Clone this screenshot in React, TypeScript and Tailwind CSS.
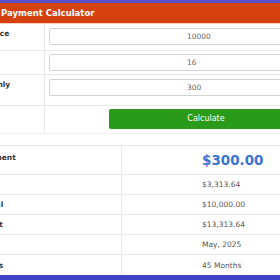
export default function App() {
  const results = [
    { label: 'Total Interest', value: '$3,313.64' },
    { label: 'Total Principal', value: '$10,000.00' },
    { label: 'Total Payment', value: '$13,313.64' },
    { label: 'Payoff Date', value: 'May, 2025' },
    { label: 'Payoff Months', value: '45 Months' },
  ];

  return (
    <div className="w-[280px] h-[280px] overflow-hidden bg-white leading-[1.2] font-['DejaVu_Sans',sans-serif]">
      {/* top accent */}
      <div className="h-[3px] bg-[#5a4fc6]" />

      <div className="-ml-[70px] w-[420px]">
        {/* Header */}
        <div className="h-[20px] bg-[#d5420f] flex items-center pl-[45px]">
          <span className="text-white font-bold text-[8.5px] leading-[1.2] whitespace-nowrap">Loan Payment Calculator</span>
        </div>
        <div className="h-px bg-[#f7d2c2]" />

        {/* Form */}
        <div>
          <div className="flex border-b border-[#e8e8e8]">
            <div className="w-[115px] shrink-0 border-r border-[#e8e8e8] pl-[23px] pt-[5px] text-[7.5px] leading-[1.2] font-bold text-[#333] whitespace-nowrap">
              Loan Balance
            </div>
            <div className="pl-[4px] pt-[4px] pb-[5px]">
              <input
                readOnly
                value="10000"
                className="block w-[300px] h-[17px] border border-[#d3d3d3] rounded-[2px] pl-[137px] text-[7.5px] text-[#666] outline-none"
              />
            </div>
          </div>
          <div className="flex border-b border-[#e8e8e8]">
            <div className="w-[115px] shrink-0 border-r border-[#e8e8e8] pl-[23px] pt-[5px] text-[7.5px] leading-[1.2] font-bold text-[#333] whitespace-nowrap">
              APR (%)
            </div>
            <div className="pl-[4px] pt-[3px] pb-[3px]">
              <input
                readOnly
                value="16"
                className="block w-[300px] h-[17px] border border-[#d3d3d3] rounded-[2px] pl-[137px] text-[7.5px] text-[#666] outline-none"
              />
            </div>
          </div>
          <div className="flex border-b border-[#e8e8e8]">
            <div className="w-[115px] shrink-0 border-r border-[#e8e8e8] pl-[25px] pt-[5px] text-[7.5px] leading-[1.2] font-bold text-[#333] whitespace-nowrap">
              Paid Monthly
            </div>
            <div className="pl-[4px] pt-[4px] pb-[9px]">
              <input
                readOnly
                value="300"
                className="block w-[300px] h-[17px] border border-[#d3d3d3] rounded-[2px] pl-[137px] text-[7.5px] text-[#666] outline-none"
              />
            </div>
          </div>
          <div className="flex border-b border-[#f0f0f0]">
            <div className="w-[115px] shrink-0 border-r border-[#e8e8e8]" />
            <div className="pl-[64px] pt-[3px] pb-[4px]">
              <button className="w-[194px] h-[20px] bg-[#2a9a1b] rounded-[2px] text-white text-[8px] leading-[1.2] flex items-center justify-center">
                Calculate
              </button>
            </div>
          </div>
        </div>

        {/* Results */}
        <div className="mt-[11px] border-t border-[#e8e8e8]">
          <div className="flex h-[29px] border-b border-[#e8e8e8]">
            <div className="w-[192px] shrink-0 border-r border-[#e8e8e8] pl-[12px] pt-[7px] text-[7.5px] leading-[1.2] font-bold text-[#333] whitespace-nowrap">
              Monthly Payment
            </div>
            <div className="pl-[80px] flex items-center text-[13.5px] leading-[1.2] font-bold text-[#3b73cf]">
              $300.00
            </div>
          </div>
          {results.map((r, i) => (
            <div
              key={r.label}
              className={`flex h-[20px] ${i < results.length - 1 ? 'border-b border-[#e8e8e8]' : ''}`}
            >
              <div className="w-[192px] shrink-0 border-r border-[#e8e8e8] pl-[13px] flex items-center text-[7.5px] leading-[1.2] font-bold text-[#333] whitespace-nowrap">
                {r.label}
              </div>
              <div className="pl-[80px] flex items-center text-[7.5px] leading-[1.2] text-[#555] whitespace-nowrap">
                {r.value}
              </div>
            </div>
          ))}
        </div>
        <div className="h-[10px] bg-[#3f44c4]" />
      </div>
    </div>
  );
}
